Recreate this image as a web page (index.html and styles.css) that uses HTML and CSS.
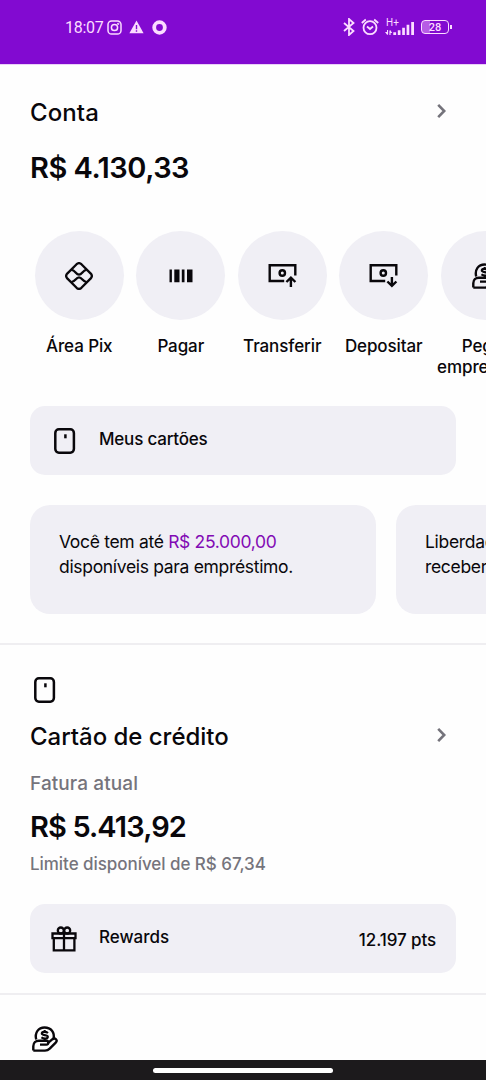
FILE: index.html
```html
<!DOCTYPE html>
<html lang="pt-BR">
<head>
<meta charset="utf-8">
<title>Conta</title>
<link rel="stylesheet" href="styles.css">
</head>
<body>
<svg class="defs" width="0" height="0">
  <symbol id="card" viewBox="0 0 22 26"><rect x="1.3" y="1.3" width="18.600" height="23.400" rx="3.600" fill="none" stroke="currentColor" stroke-width="2.500"/><path d="M11.400 6.300v4" stroke="currentColor" stroke-width="2.500"/></symbol>
  <symbol id="chevron" viewBox="0 0 10 16"><path d="M1.200 1.800 7.200 8l-6 6.200" fill="none" stroke="currentColor" stroke-width="2.600"/></symbol>
  <symbol id="loan" viewBox="0 0 26 26"><g fill="none" stroke="currentColor" stroke-width="2.400" stroke-linejoin="round"><path d="M4.200 13.500C2.500 6.500 6.500 1.500 12.500 1.500c6.500 0 10.500 5 9 11.500"/><path d="M1.300 24.600v-4.300c0-3.400 2.500-5.600 5.500-5.600h7.700c2.300 0 2.500 3.900 0 3.900H8"/><path d="M15.800 17.200l4.700-4c2.600-2 5.600 1 3.200 3.400l-6 6c-1.400 1.400-2.800 2-4.700 2H1.300"/><path d="M16 7c-2.200-1.800-6.200-1.500-6.200.6s6 .8 6 3.200-4 2.200-6.400.6" stroke-width="2.200"/><path d="M12.700 4v2M12.700 12v2" stroke-width="2"/></g></symbol>
</svg>
<div class="screen">
  <header class="status">
    <div class="status-left">
      <span class="clock">18:07</span>
      <svg class="insta" width="15" height="15" viewBox="0 0 15 15" fill="none" stroke="currentColor" stroke-width="1.500"><rect x="1" y="1" width="13" height="13" rx="3.600"/><circle cx="7.500" cy="7.500" r="3.100"/><circle cx="11.200" cy="3.800" r=".4"/></svg>
      <svg class="warn" width="15" height="14" viewBox="0 0 15 14"><path d="M7.500.5 14.600 13.300H.4z" fill="currentColor"/><path d="M7.500 5v4.200M7.500 10.200v1.600" stroke="#820ad1" stroke-width="1.400"/></svg>
      <svg class="ring" width="15" height="15" viewBox="0 0 15 15"><circle cx="7.500" cy="7.500" r="5.300" fill="none" stroke="currentColor" stroke-width="3.800"/></svg>
    </div>
    <div class="status-right">
      <svg width="12" height="18" viewBox="0 0 12 18" fill="none" stroke="currentColor" stroke-width="1.800"><path d="M1 5l9.500 8L6 17V1l4.500 4L1 13"/></svg>
      <svg class="alarm" width="18" height="18" viewBox="0 0 18 18" fill="none" stroke="currentColor" stroke-width="1.800"><circle cx="9" cy="9.700" r="6.500"/><path d="M6 8.500l3 2.500 3-2.500M.8 5 4.800 1.500M17.200 5l-4-3.500"/></svg>
      <div class="network">
        <span class="hplus">H+</span>
        <svg width="30" height="15" viewBox="0 0 30 15" fill="currentColor"><path d="M2 9v2H0l2.300 3 .8-.7V9zM4.400 14v-4.300L5.200 9l2 3H5.600v2z"/><path d="M8.300 11.300h2.800V14H8.300zM12.800 9.300h2.700V14h-2.700zM17.200 6.700h2.700V14h-2.700zM21.600 3.700h2.700V14h-2.700zM26.200 1h2.800v13h-2.800z"/></svg>
      </div>
      <div class="battery"><span>28</span></div>
    </div>
  </header>

  <main class="content">
    <section class="account">
      <div class="title-row"><h1 class="title conta">Conta</h1><svg class="chev" width="10" height="16"><use href="#chevron"/></svg></div>
      <p class="amount balance">R$ 4.130,33</p>
      <nav class="actions">
        <div class="action"><span class="disc"><svg width="28" height="28" viewBox="0 0 29 29" fill="none" stroke="currentColor" stroke-width="2.400" stroke-linejoin="round"><path d="M12 2.300q2.500-2.200 5 0l9.700 9.700q2.200 2.500 0 5L17 26.700q-2.500 2.200-5 0L2.300 17q-2.200-2.500 0-5z"/><path d="M6.500 8.200c4.200 0 4.600 4.800 8 4.800s3.800-4.800 8-4.800M6.500 20.800c4.200 0 4.600-4.800 8-4.800s3.800 4.800 8 4.800"/></svg></span><span class="label">Área Pix</span></div>
        <div class="action"><span class="disc"><svg width="24" height="14" viewBox="0 0 24 14" fill="currentColor"><path d="M.5.500h2.400v12.800H.5zM5.300.500h5.200v12.800h-5.200zM12.800.500h2.700v12.800h-2.700zM18 .500h5.500v12.800H18z"/></svg></span><span class="label">Pagar</span></div>
        <div class="action"><span class="disc"><svg class="note" width="29" height="25" viewBox="0 0 29 25" fill="none" stroke="currentColor" stroke-width="2.400"><path d="M16.200 18H1.700V2.200h25.600v10.300"/><circle cx="14.300" cy="10" r="2.700"/><path d="M22.900 24V15M18.400 19l4.500-4.400 4.500 4.400"/></svg></span><span class="label">Transferir</span></div>
        <div class="action"><span class="disc"><svg class="note" width="29" height="25" viewBox="0 0 29 25" fill="none" stroke="currentColor" stroke-width="2.400"><path d="M16.200 18H1.700V2.200h25.600v10.300"/><circle cx="14.300" cy="10" r="2.700"/><path d="M22.900 14V23M18.400 18.500l4.500 4.400 4.500-4.400"/></svg></span><span class="label">Depositar</span></div>
        <div class="action"><span class="disc"><svg width="26" height="26"><use href="#loan"/></svg></span><span class="label">Pegar<br>emprestado</span></div>
      </nav>
      <div class="bar"><svg class="bar-icon" width="22" height="26"><use href="#card"/></svg><span class="bar-text cards">Meus cartões</span></div>
      <div class="promos">
        <div class="promo">Você tem até <em>R$ 25.000,00</em><br>disponíveis para empréstimo.</div>
        <div class="promo">Liberdade para<br>receber e pagar.</div>
      </div>
    </section>

    <section class="credit">
      <svg class="credit-icon" width="22" height="26"><use href="#card"/></svg>
      <div class="title-row"><h2 class="title cartao">Cartão de crédito</h2><svg class="chev" width="10" height="16"><use href="#chevron"/></svg></div>
      <p class="muted current">Fatura atual</p>
      <p class="amount invoice">R$ 5.413,92</p>
      <p class="muted limit">Limite disponível de R$ 67,34</p>
      <div class="bar rewards"><svg class="bar-icon" width="26" height="26" viewBox="0 0 26 26" fill="none" stroke="currentColor" stroke-width="2.300"><path d="M1.500 7.500h23v4.700h-23zM2.800 12.500v11.800h20.600V12.500M13 7.500v16.800"/><circle cx="9.800" cy="4.500" r="3"/><circle cx="16.200" cy="4.500" r="3"/></svg><span class="bar-text">Rewards</span><span class="points">12.197 pts</span></div>
    </section>

    <section class="loans"><svg width="26" height="26"><use href="#loan"/></svg></section>
  </main>
  <footer class="navbar"><span class="handle"></span></footer>
</div>
</body>
</html>
```
FILE: styles.css
```css
* { box-sizing: border-box; }
body { margin: 0; background: #fefefe; }
h1, h2, p { margin: 0; }
.defs { position: absolute; }
.screen {
  width: 486px; height: 1080px; overflow: hidden;
  display: flex; flex-direction: column;
  font-family: Inter, "Liberation Sans", sans-serif;
  font-weight: 500; color: #09070b;
}
svg { display: block; flex: none; }
.status {
  height: 65px; flex: none; padding: 0 37px 10px 65px;
  display: flex; align-items: center; justify-content: space-between;
  background: #820ad1; color: #fbdcff; border-bottom: 1px solid #ead0f8;
}
.status-left, .status-right { display: flex; align-items: center; }
.clock { font: 400 16px Roboto, sans-serif; width: 42px; letter-spacing: -.3px; padding-top: 1px; }
.warn { margin-left: 7px; }
.ring { margin-left: 8px; }
.alarm { margin-left: 6px; }
.network { width: 31px; height: 18px; margin-left: 6px; display: grid; }
.network > * { grid-area: 1 / 1; }
.network svg { align-self: end; }
.hplus { font: 400 10px/9px Roboto, sans-serif; padding-left: 1px; }
.battery {
  width: 28px; height: 14px; margin-left: 5px;
  border: 1.5px solid currentColor; border-radius: 4px;
  display: flex; align-items: center; justify-content: center;
  background: linear-gradient(90deg, #b75ce5 30%, transparent 30%);
  font: 500 11px/11px Roboto, sans-serif; position: relative;
}
.battery::after { content: ""; position: absolute; right: -4px; top: 3.500px; width: 2px; height: 4px; background: currentColor; }
.content { flex: 1; overflow: hidden; }
.account { height: 580px; padding: 33px 30px 0; border-bottom: 2px solid #efeef1; }
.title-row { height: 30px; display: flex; align-items: center; justify-content: space-between; padding-right: 9px; }
.title { font-size: 24px; line-height: 30px; font-weight: 500; white-space: nowrap; }
.conta { letter-spacing: .1px; }
.cartao { letter-spacing: -.03px; }
.chev { color: #74737b; margin-top: -4px; }
.amount { font-size: 29px; line-height: 36px; font-weight: 600; white-space: nowrap; }
.balance { margin-top: 22px; letter-spacing: -.5px; }
.actions { display: flex; width: max-content; margin: 45px 0 0 -1.500px; height: 175px; }
.action { width: 101.500px; flex: none; display: flex; flex-direction: column; align-items: center; }
.disc { width: 89px; height: 89px; border-radius: 50%; background: #f0eff5; display: grid; place-items: center; }
.note { margin-top: 0; }
.label { margin-top: 16px; font-size: 17px; line-height: 21px; text-align: center; white-space: nowrap; letter-spacing: -.1px; }
.bar { height: 69px; width: 426px; border-radius: 15px; background: #f0eff5; display: flex; align-items: center; padding: 0 20px 0 24px; }
.bar-icon { margin-right: 23px; }
.bar-text { font-size: 17px; line-height: 22px; margin-top: -3px; }
.cards { letter-spacing: -.2px; }
.promos { display: flex; gap: 20px; width: max-content; margin-top: 30px; }
.promo { width: 346px; height: 108.500px; border-radius: 20px; background: #f0eff5; padding: 24px 29px; font-size: 17.500px; line-height: 25px; font-weight: 400; white-space: nowrap; letter-spacing: -.32px; }
.promo em { font-style: normal; color: #820ab4; }
.credit { height: 350px; padding: 32px 30px 0; border-bottom: 2px solid #efeef1; }
.credit-icon { margin: 0 0 19px 4px; }
.muted { color: #75747c; white-space: nowrap; }
.current { font-size: 19px; line-height: 24px; margin-top: 20px; letter-spacing: .1px; }
.invoice { margin-top: 13px; letter-spacing: -.9px; }
.limit { font-size: 17px; line-height: 22px; margin-top: 8px; letter-spacing: -.05px; }
.rewards { margin-top: 29px; padding-left: 21px; }
.rewards .bar-icon { margin-right: 22px; }
.points { margin-left: auto; font-size: 17px; letter-spacing: -.1px; margin-top: 2px; }
.loans { padding: 31px 32px 0; }
.navbar { height: 20px; flex: none; background: #1c1a1c; display: flex; justify-content: center; padding-top: 8px; }
.handle { width: 180px; height: 5px; border-radius: 3px; background: #fff; }
```
